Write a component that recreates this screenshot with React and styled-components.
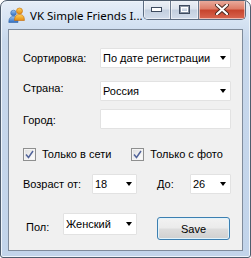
import { styled, createGlobalStyle } from "styled-components";

const Global = createGlobalStyle`
  html, body {
    margin: 0;
    padding: 0;
    background: #ffffff;
  }
  body {
    font-family: "Liberation Sans", Arial, sans-serif;
    font-size: 11px;
    color: #000;
  }
`;

const Window = styled.div`
  box-sizing: border-box;
  width: 251px;
  height: 258px;
  display: flex;
  flex-direction: column;
  border: 1px solid #4f5d6e;
  border-radius: 7px 7px 3px 3px;
  background: linear-gradient(180deg, #e6eef8 0px, #d6e3f3 20px, #c8d8ec 40px, #c2d4ea 100%);
  box-shadow: inset 0 0 0 1px #eef4fb;
  overflow: hidden;
`;

const TitleBar = styled.div`
  height: 28px;
  display: flex;
  align-items: flex-start;
  padding-left: 7px;
`;

const TitleLeft = styled.div`
  display: flex;
  align-items: center;
  gap: 5px;
  height: 28px;
  flex: none;
`;

const Title = styled.span`
  font-family: "Noto Sans", "Open Sans", sans-serif;
  font-size: 11.5px;
  color: #000;
  white-space: nowrap;
`;

const Caption = styled.div`
  margin-left: auto;
  margin-right: 6px;
  display: flex;
  flex: none;
  height: 19px;
  margin-top: -1px;
  border: 1px solid #5c6b80;
  border-top: none;
  border-radius: 0 0 5px 5px;
  overflow: hidden;
`;

const CapButton = styled.div`
  width: ${(p) => p.$w}px;
  height: 100%;
  display: flex;
  align-items: center;
  justify-content: center;
  border-left: ${(p) => (p.$first ? "none" : "1px solid #6c7a8e")};
  background: ${(p) =>
    p.$close
      ? "linear-gradient(180deg, #eab0a2 0%, #de7e69 45%, #c7452e 55%, #d86650 100%)"
      : "linear-gradient(180deg, #eef2f7 0%, #dde4ee 45%, #c3cfdf 55%, #d2dceb 100%)"};
  box-shadow: inset 0 0 0 1px rgba(255, 255, 255, 0.55);
`;

const Client = styled.div`
  margin: 0 7px;
  height: 222px;
  box-sizing: border-box;
  border: 1px solid #7f8b9b;
  background: #f0f0f0;
  padding: 18px 11px 0 14px;
  display: flex;
  flex-direction: column;
`;

const Row = styled.div`
  display: flex;
  align-items: center;
  height: ${(p) => p.$h || 20}px;
  margin-top: ${(p) => p.$mt || 0}px;
`;

const Label = styled.span`
  width: ${(p) => p.$w}px;
  flex: none;
  padding-left: ${(p) => p.$pl || 0}px;
  box-sizing: border-box;
  position: relative;
  top: ${(p) => p.$dy || 0}px;
  white-space: nowrap;
`;

const Combo = styled.div`
  box-sizing: border-box;
  width: ${(p) => p.$w}px;
  height: ${(p) => p.$h || 20}px;
  flex: none;
  display: flex;
  align-items: center;
  background: #fff;
  border: 1px solid #e2e2e2;
  border-radius: 1px;
  padding-left: 2px;
  white-space: nowrap;
  align-self: ${(p) => p.$self || "auto"};
`;

const ComboText = styled.span`
  flex: 1;
  overflow: hidden;
`;

const Arrow = styled.span`
  width: 0;
  height: 0;
  border-left: 3.5px solid transparent;
  border-right: 3.5px solid transparent;
  border-top: 4px solid #000;
  margin: 0 4px 0 4px;
`;

const TextBox = styled.div`
  box-sizing: border-box;
  width: 131px;
  height: 20px;
  background: #fff;
  border: 1px solid #e2e2e2;
  border-radius: 1px;
`;

const Check = styled.label`
  display: flex;
  align-items: center;
  gap: 6px;
  margin-left: ${(p) => p.$ml || 0}px;
`;

const Box = styled.span`
  box-sizing: border-box;
  width: 13px;
  height: 13px;
  border: 1px solid #8e8f8f;
  background: linear-gradient(135deg, #dcdcdc 0%, #f6f6f6 70%, #ffffff 100%);
  box-shadow: inset 0 0 0 1px #f4f4f4;
  display: flex;
  align-items: center;
  justify-content: center;
`;

const SaveButton = styled.button`
  box-sizing: border-box;
  width: 73px;
  height: 23px;
  margin-left: 20px;
  align-self: flex-end;
  font-family: "Liberation Sans", Arial, sans-serif;
  font-size: 11px;
  color: #000;
  border: 1px solid #3c7fb1;
  border-radius: 3px;
  background: linear-gradient(180deg, #f2f2f2 0%, #ebebeb 48%, #dddddd 52%, #cfcfcf 100%);
  box-shadow: inset 0 0 0 1px #e2f3fb;
  padding: 0;
`;

function AppIcon() {
  return (
    <svg width="17" height="16" viewBox="0 0 17 16">
      <defs>
        <linearGradient id="bl" x1="0" y1="0" x2="0" y2="1">
          <stop offset="0" stopColor="#9cc4f2" />
          <stop offset="1" stopColor="#2e6cc0" />
        </linearGradient>
        <linearGradient id="or" x1="0" y1="0" x2="0" y2="1">
          <stop offset="0" stopColor="#ffd35a" />
          <stop offset="1" stopColor="#e58a10" />
        </linearGradient>
      </defs>
      <circle cx="5.5" cy="6" r="2.8" fill="url(#bl)" stroke="#3466a8" strokeWidth="0.6" />
      <path d="M0.8 15.5 C0.8 11 2.5 9.4 5.5 9.4 C8.5 9.4 10 11 10 15.5 Z" fill="url(#bl)" stroke="#3466a8" strokeWidth="0.6" />
      <circle cx="11.5" cy="4" r="3" fill="url(#or)" stroke="#c26a08" strokeWidth="0.6" />
      <path d="M6.5 13.5 C6.5 8.8 8.5 7.5 11.5 7.5 C14.5 7.5 16.4 8.8 16.4 13.5 Z" fill="url(#or)" stroke="#c26a08" strokeWidth="0.6" />
    </svg>
  );
}

function Tick() {
  return (
    <svg width="9" height="9" viewBox="0 0 9 9">
      <path d="M1 4.5 L3.5 7.5 L8 1" fill="none" stroke="#52649a" strokeWidth="1.5" />
    </svg>
  );
}

function DropDown({ w, h, text, self }) {
  return (
    <Combo $w={w} $h={h} $self={self}>
      <ComboText>{text}</ComboText>
      <Arrow />
    </Combo>
  );
}

export default function App() {
  return (
    <>
      <Global />
      <Window>
        <TitleBar>
          <TitleLeft>
            <AppIcon />
            <Title>VK Simple Friends I...</Title>
          </TitleLeft>
          <Caption>
            <CapButton $w={26} $first>
              <svg width="11" height="5" viewBox="0 0 11 5">
                <rect x="0.5" y="0.5" width="10" height="4" fill="#fff" stroke="#3d4a5e" />
              </svg>
            </CapButton>
            <CapButton $w={27}>
              <svg width="11" height="9" viewBox="0 0 11 9">
                <rect x="0.5" y="0.5" width="10" height="8" fill="none" stroke="#3d4a5e" />
                <rect x="2.5" y="2.5" width="6" height="4" fill="none" stroke="#ffffff" />
                <rect x="1.5" y="1.5" width="8" height="6" fill="none" stroke="#3d4a5e" strokeOpacity="0.5" />
              </svg>
            </CapButton>
            <CapButton $w={46} $close>
              <svg width="14" height="11" viewBox="0 0 14 11">
                <path d="M2 1 L12 10 M12 1 L2 10" stroke="#4a2a22" strokeWidth="4" strokeLinecap="round" />
                <path d="M2 1 L12 10 M12 1 L2 10" stroke="#ffffff" strokeWidth="2.2" strokeLinecap="round" />
              </svg>
            </CapButton>
          </Caption>
        </TitleBar>
        <Client>
          <Row>
            <Label $w={77}>Сортировка:</Label>
            <DropDown w={131} text="По дате регистрации" />
          </Row>
          <Row $mt={13}>
            <Label $w={77} $dy={-3}>Страна:</Label>
            <DropDown w={131} text="Россия" />
          </Row>
          <Row $mt={8}>
            <Label $w={77} $dy={1}>Город:</Label>
            <TextBox />
          </Row>
          <Row $mt={15}>
            <Check>
              <Box>
                <Tick />
              </Box>
              Только в сети
            </Check>
            <Check $ml={20}>
              <Box>
                <Tick />
              </Box>
              Только с фото
            </Check>
          </Row>
          <Row $mt={10}>
            <Label $w={69}>Возраст от:</Label>
            <DropDown w={45} text="18" />
            <Label $w={53} $pl={20}>До:</Label>
            <DropDown w={41} text="26" />
          </Row>
          <Row $mt={19} $h={27}>
            <Label $w={40} $pl={3}>Пол:</Label>
            <DropDown w={74} h={22} text="Женский" self="flex-start" />
            <SaveButton>Save</SaveButton>
          </Row>
        </Client>
      </Window>
    </>
  );
}
